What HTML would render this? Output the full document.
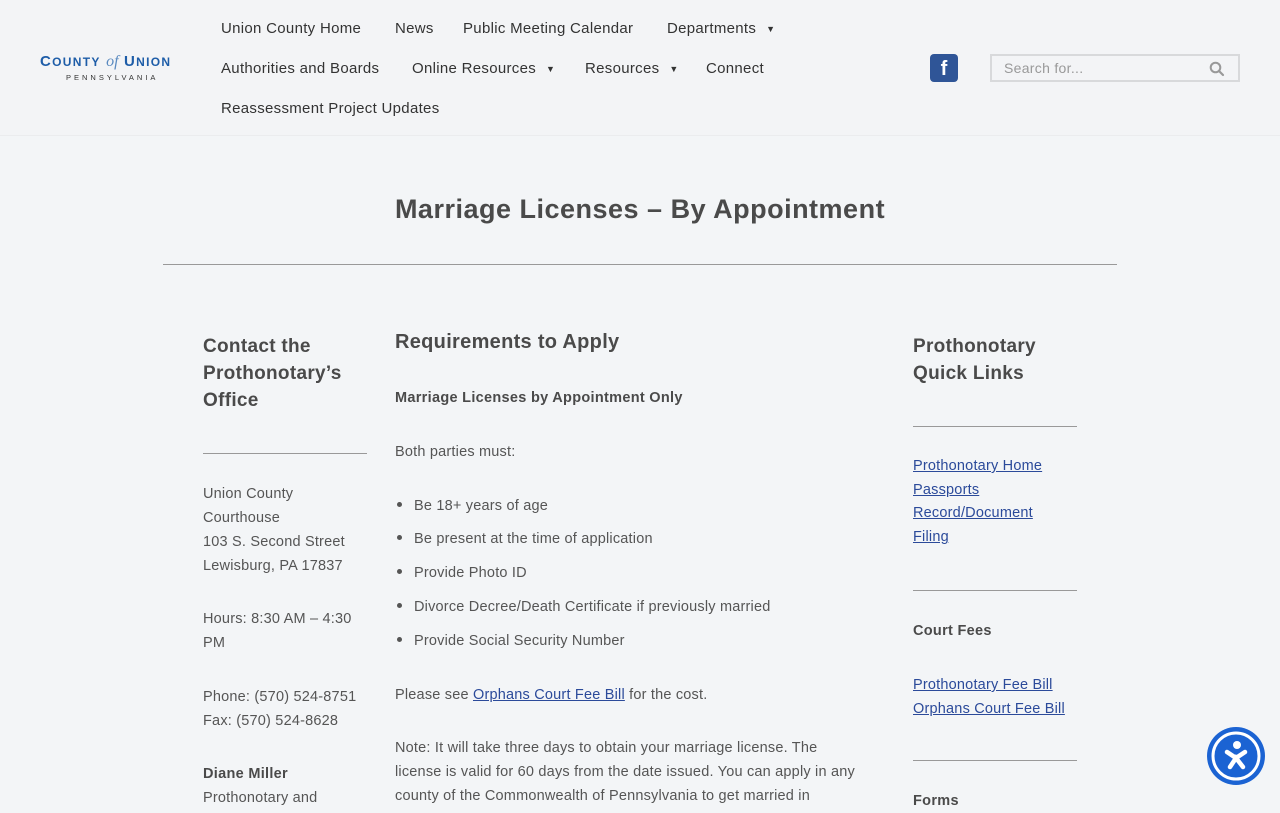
<!DOCTYPE html>
<html><head><meta charset="utf-8"><style>
*{margin:0;padding:0;box-sizing:border-box}
body{width:1280px;height:800px;overflow:hidden;background:#f3f5f7;font-family:"Liberation Sans",Arial,sans-serif;color:#4f4f4f;position:relative}
.a{position:absolute;white-space:nowrap}
.nav{font-size:15px;color:#333;line-height:20px;letter-spacing:.3px}
.t{font-size:14.5px;line-height:24px;color:#555;letter-spacing:.2px}
.h{font-weight:bold;color:#4a4a4a;letter-spacing:.3px}
a{color:#2b4a9a;text-decoration:underline}
.hr{position:absolute;height:1px;background:#999}
.car{font-size:9px;margin-left:10px;vertical-align:1px}
.dot{display:inline-block;width:5px;height:5px;border-radius:50%;background:#555;margin-right:12px;vertical-align:3px}
</style></head><body>
<div class="a" style="left:0;top:0;width:1280px;height:136px;background:#f3f4f6;border-bottom:1px solid #ebecee"></div>
<div class="a" style="left:40px;top:53px;font-size:15px;font-weight:bold;color:#1e5da8;letter-spacing:1.3px">C<span style="font-size:12px">OUNTY</span> <span style="font-family:'Liberation Serif',serif;font-style:italic;font-weight:normal;color:#5a8ac0;font-size:16px;letter-spacing:0">of</span> U<span style="font-size:12px">NION</span></div>
<div class="a" style="left:66px;top:73px;font-size:7.5px;letter-spacing:3px;color:#333">PENNSYLVANIA</div>
<div class="a nav" style="left:221px;top:19px">Union County Home</div>
<div class="a nav" style="left:395px;top:19px">News</div>
<div class="a nav" style="left:463px;top:19px">Public Meeting Calendar</div>
<div class="a nav" style="left:667px;top:19px">Departments<span class="car">▼</span></div>
<div class="a nav" style="left:221px;top:59px">Authorities and Boards</div>
<div class="a nav" style="left:412px;top:59px">Online Resources<span class="car">▼</span></div>
<div class="a nav" style="left:585px;top:59px">Resources<span class="car">▼</span></div>
<div class="a nav" style="left:706px;top:59px">Connect</div>
<div class="a nav" style="left:221px;top:99px">Reassessment Project Updates</div>
<div class="a" style="left:930px;top:54px;width:28px;height:28px;background:#2f5597;border-radius:4px;color:#fff;font-weight:bold;font-size:20px;text-align:center;line-height:30px">f</div>
<div class="a" style="left:990px;top:54px;width:250px;height:28px;border:2px solid #d8d9db;background:#f3f4f6"></div>
<div class="a" style="left:1004px;top:60px;font-size:14px;color:#999;letter-spacing:.3px">Search for...</div>
<svg class="a" style="left:1209px;top:61px" width="16" height="16" viewBox="0 0 16 16"><circle cx="6.5" cy="6.5" r="4.8" fill="none" stroke="#999" stroke-width="2"/><path d="M10 10l4 4" stroke="#999" stroke-width="2.2" stroke-linecap="round"/></svg>

<div class="a" style="left:0;width:1280px;top:194px;text-align:center;font-size:27px;font-weight:bold;color:#4a4a4a;letter-spacing:.5px">Marriage Licenses – By Appointment</div>
<div class="hr" style="left:163px;width:954px;top:264px"></div>

<div class="a h" style="left:203px;top:333px;font-size:19px;line-height:27px">Contact the<br>Prothonotary’s<br>Office</div>
<div class="hr" style="left:203px;width:164px;top:453px"></div>
<div class="a t" style="left:203px;top:482px">Union County<br>Courthouse<br>103 S. Second Street<br>Lewisburg, PA 17837</div>
<div class="a t" style="left:203px;top:607px">Hours: 8:30 AM – 4:30<br>PM</div>
<div class="a t" style="left:203px;top:685px">Phone: (570) 524-8751<br>Fax: (570) 524-8628</div>
<div class="a t h" style="left:203px;top:762px">Diane Miller</div>
<div class="a t" style="left:203px;top:786px">Prothonotary and</div>

<div class="a h" style="left:395px;top:331px;font-size:20px">Requirements to Apply</div>
<div class="a t h" style="left:395px;top:386px">Marriage Licenses by Appointment Only</div>
<div class="a t" style="left:395px;top:440px">Both parties must:</div>
<div class="a t" style="left:397px;top:494px"><span class="dot"></span>Be 18+ years of age</div>
<div class="a t" style="left:397px;top:527px"><span class="dot"></span>Be present at the time of application</div>
<div class="a t" style="left:397px;top:561px"><span class="dot"></span>Provide Photo ID</div>
<div class="a t" style="left:397px;top:595px"><span class="dot"></span>Divorce Decree/Death Certificate if previously married</div>
<div class="a t" style="left:397px;top:629px"><span class="dot"></span>Provide Social Security Number</div>
<div class="a t" style="left:395px;top:683px">Please see <a>Orphans Court Fee Bill</a> for the cost.</div>
<div class="a t" style="left:395px;top:736px">Note: It will take three days to obtain your marriage license. The<br>license is valid for 60 days from the date issued. You can apply in any<br>county of the Commonwealth of Pennsylvania to get married in</div>

<div class="a h" style="left:913px;top:333px;font-size:19px;line-height:27px">Prothonotary<br>Quick Links</div>
<div class="hr" style="left:913px;width:164px;top:426px"></div>
<div class="a t" style="left:913px;top:455px;line-height:23.7px"><a>Prothonotary Home</a><br><a>Passports</a><br><a>Record/Document</a><br><a>Filing</a></div>
<div class="hr" style="left:913px;width:164px;top:590px"></div>
<div class="a t h" style="left:913px;top:619px">Court Fees</div>
<div class="a t" style="left:913px;top:673px"><a>Prothonotary Fee Bill</a><br><a>Orphans Court Fee Bill</a></div>
<div class="hr" style="left:913px;width:164px;top:760px"></div>
<div class="a t h" style="left:913px;top:789px">Forms</div>

<svg class="a" style="left:1206px;top:726px" width="60" height="60" viewBox="0 0 60 60"><circle cx="30" cy="30" r="29" fill="#1b63d3"/><circle cx="30" cy="30" r="23" fill="none" stroke="#fff" stroke-width="3"/><circle cx="31" cy="19" r="4" fill="#fff"/><path d="M21 26l9 6l9-6M24 41l6-9l7 9" stroke="#fff" stroke-width="4.5" stroke-linecap="round" fill="none"/></svg>
</body></html>
